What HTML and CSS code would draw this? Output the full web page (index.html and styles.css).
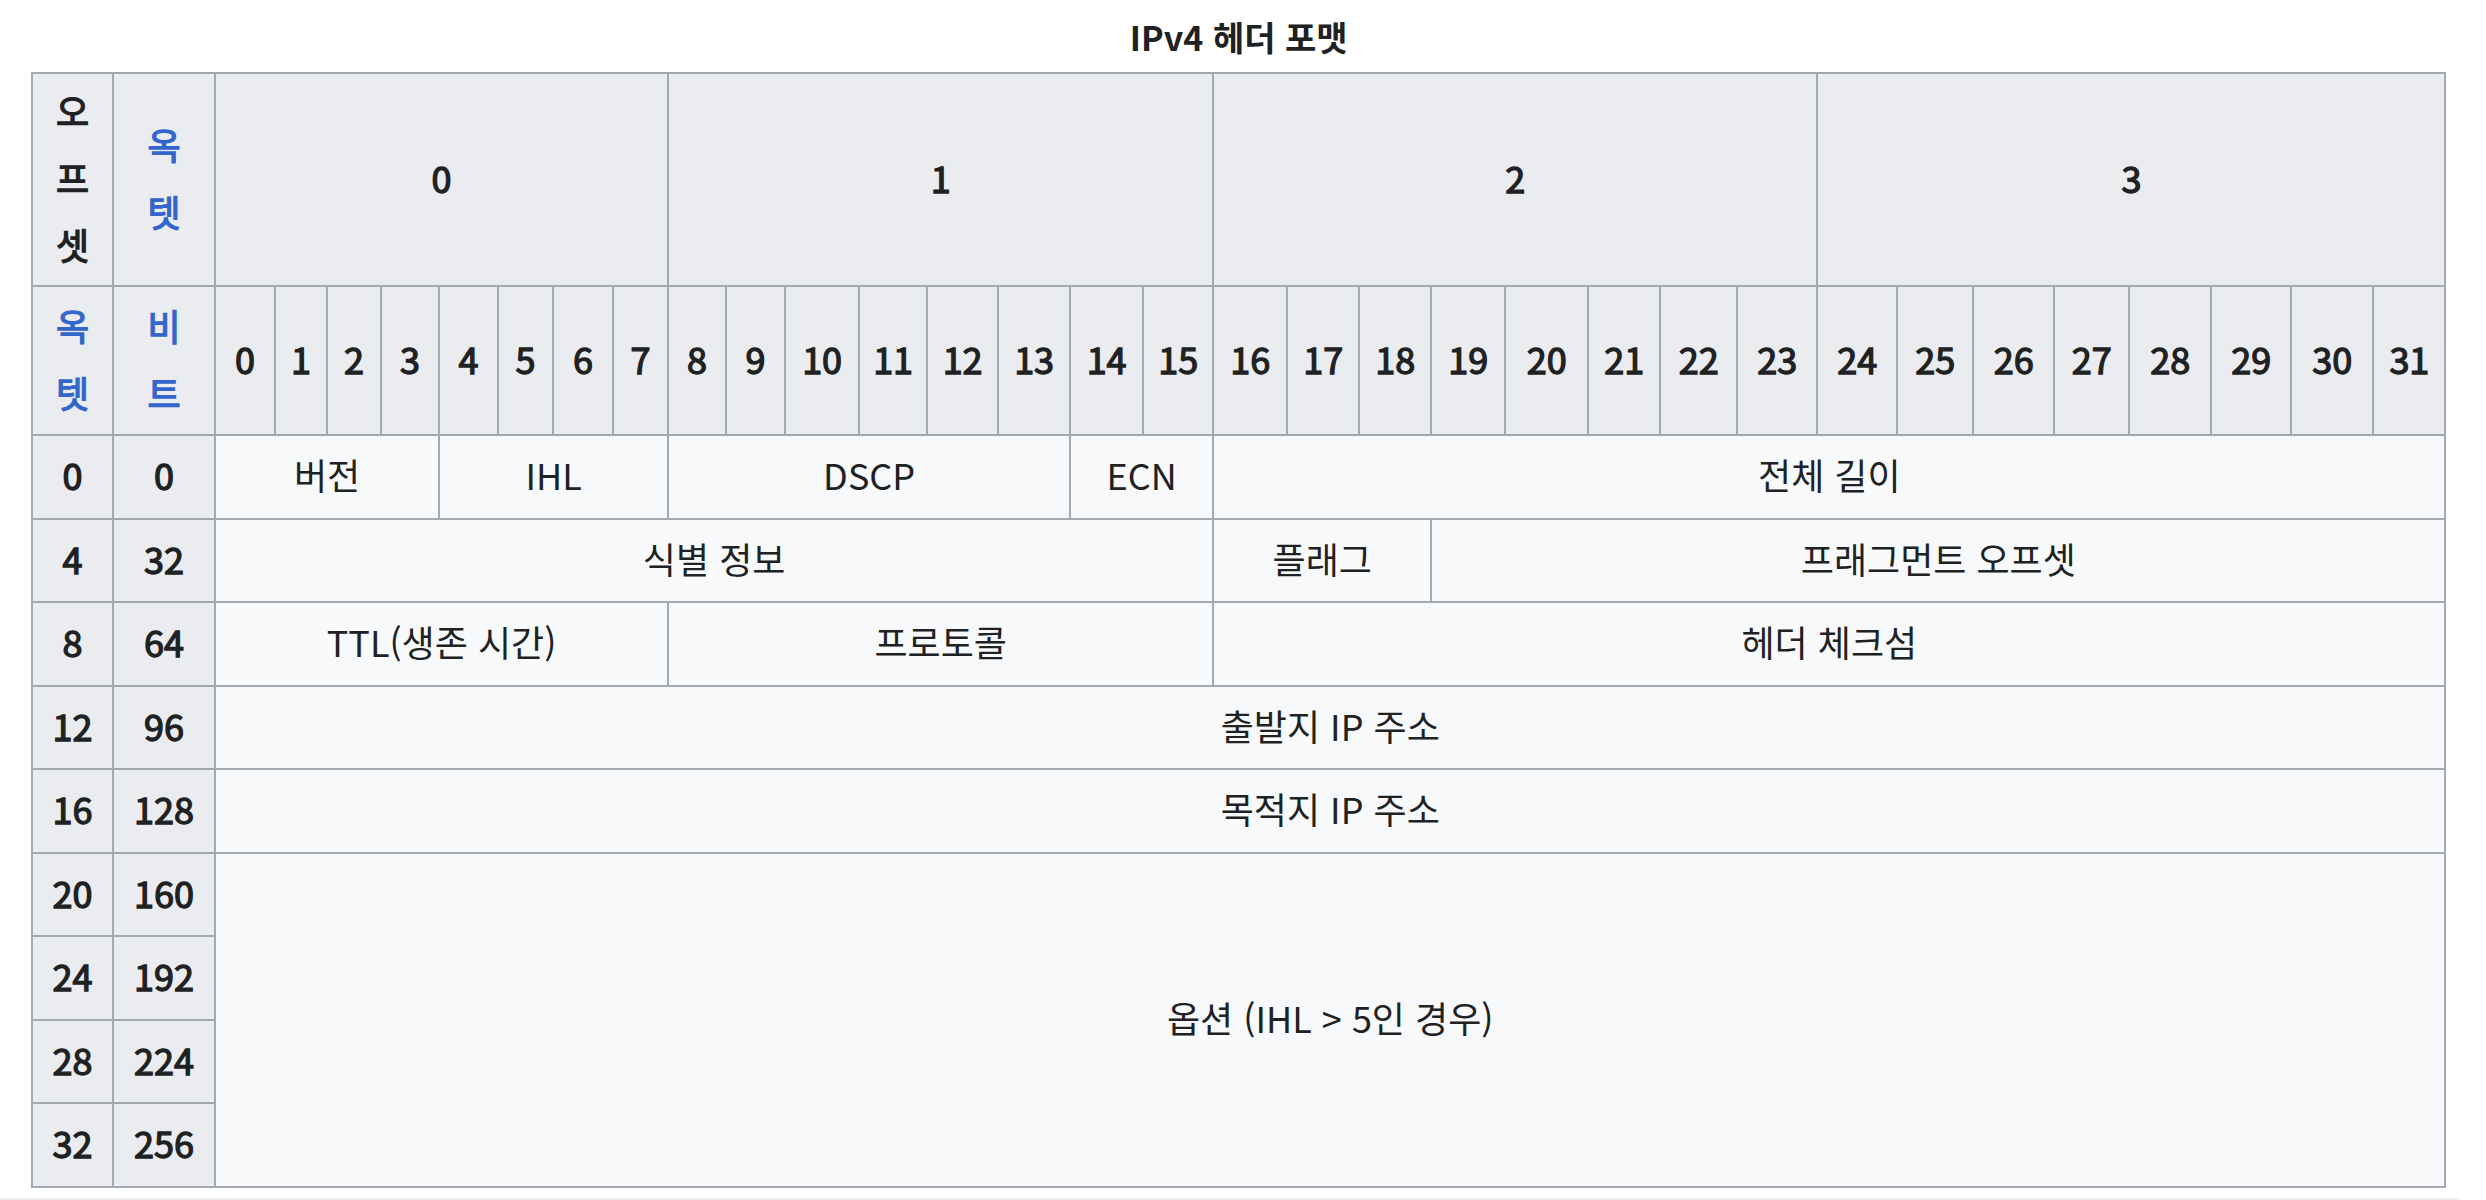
FILE: index.html
```html
<!DOCTYPE html>
<html lang="ko">
<head>
<meta charset="utf-8">
<title>IPv4 헤더 포맷</title>
<link rel="stylesheet" href="styles.css">
</head>
<body>
<div class="page">
  <table class="ipv4">
    <caption>IPv4 헤더 포맷</caption>
    <colgroup>
      <col><col>
      <col><col><col><col><col><col><col><col>
      <col><col><col><col><col><col><col><col>
      <col><col><col><col><col><col><col><col>
      <col><col><col><col><col><col><col><col>
    </colgroup>
    <thead>
      <tr class="r-octet">
        <th class="stack">오프셋</th>
        <th class="stack link">옥텟</th>
        <th colspan="8">0</th>
        <th colspan="8">1</th>
        <th colspan="8">2</th>
        <th colspan="8">3</th>
      </tr>
      <tr class="r-bit">
        <th class="stack link">옥텟</th>
        <th class="stack link">비트</th>
        <th>0</th><th>1</th><th>2</th><th>3</th><th>4</th><th>5</th><th>6</th><th>7</th>
        <th>8</th><th>9</th><th>10</th><th>11</th><th>12</th><th>13</th><th>14</th><th>15</th>
        <th>16</th><th>17</th><th>18</th><th>19</th><th>20</th><th>21</th><th>22</th><th>23</th>
        <th>24</th><th>25</th><th>26</th><th>27</th><th>28</th><th>29</th><th>30</th><th>31</th>
      </tr>
    </thead>
    <tbody>
      <tr>
        <th>0</th><th>0</th>
        <td colspan="4">버전</td>
        <td colspan="4">IHL</td>
        <td colspan="6">DSCP</td>
        <td colspan="2">ECN</td>
        <td colspan="16">전체 길이</td>
      </tr>
      <tr>
        <th>4</th><th>32</th>
        <td colspan="16">식별 정보</td>
        <td colspan="3">플래그</td>
        <td colspan="13">프래그먼트 오프셋</td>
      </tr>
      <tr>
        <th>8</th><th>64</th>
        <td colspan="8">TTL(생존 시간)</td>
        <td colspan="8">프로토콜</td>
        <td colspan="16">헤더 체크섬</td>
      </tr>
      <tr>
        <th>12</th><th>96</th>
        <td colspan="32">출발지 IP 주소</td>
      </tr>
      <tr>
        <th>16</th><th>128</th>
        <td colspan="32">목적지 IP 주소</td>
      </tr>
      <tr>
        <th>20</th><th>160</th>
        <td colspan="32" rowspan="4">옵션 (IHL &gt; 5인 경우)</td>
      </tr>
      <tr><th>24</th><th>192</th></tr>
      <tr><th>28</th><th>224</th></tr>
      <tr><th>32</th><th>256</th></tr>
    </tbody>
  </table>
  <div class="rule"></div>
</div>
</body>
</html>
```

FILE: styles.css
```css
html, body {
  margin: 0;
  padding: 0;
  background: #ffffff;
}

body {
  font-family: "Noto Sans CJK KR", "Noto Sans", "Liberation Sans", sans-serif;
  color: #202122;
}

.page {
  padding: 0 0 0 31px;
}

.ipv4 {
  border-collapse: collapse;
  table-layout: fixed;
  width: 2415px;
  background: #f8f9fa;
  font-size: 36px;
}

.ipv4 caption {
  font-size: 34px;
  font-weight: 700;
  line-height: 48px;
  padding: 13px 0 11px;
  text-align: center;
  color: #202122;
}

.ipv4 th,
.ipv4 td {
  border: 2px solid #a2a9b1;
  padding: 0 2px 5px;
  text-align: center;
  vertical-align: middle;
  line-height: 48px;
}

.ipv4 th {
  background: #eaecf0;
  font-weight: 400;
  -webkit-text-stroke: 1.3px currentColor;
}

.ipv4 td {
  font-weight: 400;
}

.ipv4 .stack {
  padding: 0 20px 4px;
  line-height: 67px;
  word-break: break-all;
}

.ipv4 .link {
  color: #3366cc;
}

.ipv4 .r-octet {
  height: 213px;
}

.ipv4 .r-bit {
  height: 149px;
}

.ipv4 tbody tr {
  height: 83.5px;
}

.ipv4 col:nth-child(1) { width: 81px; }
.ipv4 col:nth-child(2) { width: 102px; }
.ipv4 col:nth-child(3) { width: 60px; }
.ipv4 col:nth-child(4) { width: 52px; }
.ipv4 col:nth-child(5) { width: 54px; }
.ipv4 col:nth-child(6) { width: 58px; }
.ipv4 col:nth-child(7) { width: 59px; }
.ipv4 col:nth-child(8) { width: 55px; }
.ipv4 col:nth-child(9) { width: 60px; }
.ipv4 col:nth-child(10) { width: 55px; }
.ipv4 col:nth-child(11) { width: 58px; }
.ipv4 col:nth-child(12) { width: 59px; }
.ipv4 col:nth-child(13) { width: 74px; }
.ipv4 col:nth-child(14) { width: 68px; }
.ipv4 col:nth-child(15) { width: 71px; }
.ipv4 col:nth-child(16) { width: 72px; }
.ipv4 col:nth-child(17) { width: 73px; }
.ipv4 col:nth-child(18) { width: 70px; }
.ipv4 col:nth-child(19) { width: 74px; }
.ipv4 col:nth-child(20) { width: 72px; }
.ipv4 col:nth-child(21) { width: 72px; }
.ipv4 col:nth-child(22) { width: 74px; }
.ipv4 col:nth-child(23) { width: 83px; }
.ipv4 col:nth-child(24) { width: 72px; }
.ipv4 col:nth-child(25) { width: 77px; }
.ipv4 col:nth-child(26) { width: 80px; }
.ipv4 col:nth-child(27) { width: 80px; }
.ipv4 col:nth-child(28) { width: 76px; }
.ipv4 col:nth-child(29) { width: 81px; }
.ipv4 col:nth-child(30) { width: 75px; }
.ipv4 col:nth-child(31) { width: 82px; }
.ipv4 col:nth-child(32) { width: 80px; }
.ipv4 col:nth-child(33) { width: 82px; }
.ipv4 col:nth-child(34) { width: 72px; }

.rule {
  width: 2460px;
  margin: 10px 0 0 -31px;
  border-top: 2px solid #eef0f2;
}
```
